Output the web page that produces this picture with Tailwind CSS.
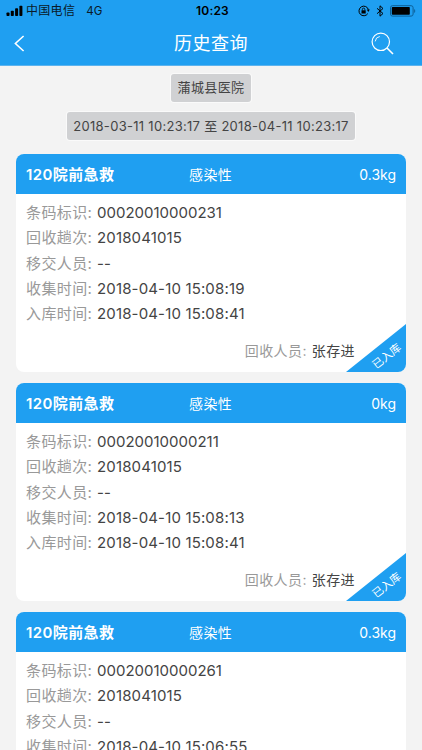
<!DOCTYPE html>
<html lang="zh-CN">
<head>
  <meta charset="UTF-8">
  <title>历史查询</title>
  <meta name="viewport" content="width=device-width, initial-scale=1.0" />
  <script src="https://cdn.jsdelivr.net/npm/@tailwindcss/browser@4"></script>
</head>
<body class="bg-[#f3f3f3] h-screen overflow-hidden font-['Inter','Noto_Sans_CJK_SC',sans-serif] text-[#444]">
  <header class="bg-[#1f9ff1] h-[66px] border-b border-[#5cb3ee]">
    <!-- Statusleiste -->
    <div class="grid grid-cols-3 items-center h-[22px] px-1.5 text-[#0a1a28] text-xs leading-none">
      <div class="flex items-center">
        <svg class="w-[17px] h-3 mr-[3px]" viewBox="0 0 17 12" fill="#000">
          <rect x="0.5" y="7.5" width="3" height="3.5" rx="0.8" />
          <rect x="4.8" y="5.7" width="3" height="5.3" rx="0.8" />
          <rect x="9.1" y="3.3" width="3" height="7.7" rx="0.8" />
          <rect x="13.4" y="0.8" width="3" height="10.2" rx="0.8" />
        </svg>
        <span class="tracking-[0.3px]">中国电信</span>
        <span class="ml-[11px] pt-0.5 text-[11.5px]">4G</span>
      </div>
      <div class="text-center text-black font-semibold tracking-[0.2px] pl-[3px]">10:23</div>
      <div class="flex items-center justify-end -mr-0.5">
        <svg class="w-3 h-3 mr-1.5" viewBox="0 0 12 12" fill="none" stroke="#000" stroke-width="1">
          <path d="M9.8 8.6A4.8 4.8 0 1 1 10.4 4.6" />
          <path d="M8.8 4.6h3L10.3 6.9z" fill="#000" stroke="none" />
          <rect x="3.5" y="5.3" width="4.2" height="3.2" fill="#000" stroke="none" />
          <path d="M4.4 5.4V4.3a1.2 1.2 0 0 1 2.4 0v1.1" stroke-width="0.8" />
        </svg>
        <svg class="w-2 h-3 mr-1.5" viewBox="0 0 8 12" fill="none" stroke="#000" stroke-width="1">
          <path d="M1 3.3l6 5.2-3 2.7V0.8l3 2.7-6 5.2" />
        </svg>
        <svg class="w-[26px] h-3 mr-0.5" viewBox="0 0 26 12" fill="none">
          <rect x="0.5" y="0.7" width="22.6" height="10.4" rx="2" stroke="#0d5f96" />
          <rect x="1.8" y="2" width="18" height="7.8" rx="0.8" fill="#000" />
          <path d="M24.2 4v4c1.4-.5 1.4-3.5 0-4z" fill="#0d5f96" />
        </svg>
      </div>
    </div>
    <!-- Titel -->
    <div class="flex items-center justify-between h-[43px] pl-3.5 pr-7 text-white">
      <svg class="w-[11px] h-[17px] mr-[12px]" viewBox="0 0 11 17" fill="none" stroke="#fff" stroke-width="1.6">
        <path d="M9.6 1L1.4 8.5l8.2 7.5" />
      </svg>
      <h1 class="ml-3.5 text-[18px] leading-none tracking-[0.5px]">历史查询</h1>
      <svg class="w-[23px] h-[23px]" viewBox="0 0 23 23" fill="none" stroke="#fff" stroke-width="1.2">
        <circle cx="9.8" cy="9.8" r="8.7" />
        <path d="M4.2 9.4a5.4 5.4 0 0 1 4.6-4.9" stroke-width="0.9" />
        <path d="M16 16l6 6" stroke-width="1.6" />
      </svg>
    </div>
  </header>

  <main class="px-4">
    <div class="flex flex-col items-center gap-2.5 pt-2 pb-3.5 text-[13px]">
      <div class="h-[28px] px-1.5 flex items-center bg-[#d0d1d3] rounded-[3px] ring-1 ring-white/60">
        <span class="tracking-[0.4px]">蒲城县医院</span>
      </div>
      <div class="h-[28px] px-1.5 pt-0.5 flex items-center bg-[#d0d1d3] rounded-[3px] ring-1 ring-white/60">
        <span class="whitespace-nowrap tracking-[0.29px]">2018-03-11 10:23:17 至 2018-04-11 10:23:17</span>
      </div>
    </div>

    <div class="flex flex-col gap-[11px]">
      <section class="relative h-[218px] shrink-0 bg-white rounded-lg overflow-hidden">
        <div class="flex items-center h-10 px-2.5 pt-px bg-[#1f9ff1] text-white text-sm">
          <h2 class="w-[163px] font-semibold text-[15px] tracking-[0.4px]">120院前急救</h2>
          <span class="flex-1 tracking-[0.4px]">感染性</span>
          <span>0.3kg</span>
        </div>
        <div class="px-2.5 pt-1.5 text-[15px] leading-[25.3px]">
          <div class="flex"><span class="w-[71px] tracking-[0.4px] text-[#999]">条码标识:</span><span>00020010000231</span></div>
          <div class="flex"><span class="w-[71px] tracking-[0.4px] text-[#999]">回收趟次:</span><span class="tracking-[0.15px]">2018041015</span></div>
          <div class="flex"><span class="w-[71px] tracking-[0.4px] text-[#999]">移交人员:</span><span>--</span></div>
          <div class="flex"><span class="w-[71px] tracking-[0.4px] text-[#999]">收集时间:</span><span class="tracking-[0.15px]">2018-04-10 15:08:19</span></div>
          <div class="flex"><span class="w-[71px] tracking-[0.4px] text-[#999]">入库时间:</span><span class="tracking-[0.15px]">2018-04-10 15:08:41</span></div>
        </div>
        <div class="flex justify-end pr-[51px] pt-3 text-sm leading-[25px] tracking-[0.4px]"><span class="w-[67px] text-[#999]">回收人员:</span><span>张存进</span></div>
        <div class="absolute right-0 bottom-0 w-[60px] h-[48px] bg-[#1f9ff1] [clip-path:polygon(100%_0,100%_100%,0_100%)]">
          <span class="absolute left-[24px] top-[24px] text-[11px] leading-4 text-white whitespace-nowrap -rotate-[38deg]">已入库</span>
        </div>
      </section>

      <section class="relative h-[218px] shrink-0 bg-white rounded-lg overflow-hidden">
        <div class="flex items-center h-10 px-2.5 pt-px bg-[#1f9ff1] text-white text-sm">
          <h2 class="w-[163px] font-semibold text-[15px] tracking-[0.4px]">120院前急救</h2>
          <span class="flex-1 tracking-[0.4px]">感染性</span>
          <span>0kg</span>
        </div>
        <div class="px-2.5 pt-1.5 text-[15px] leading-[25.3px]">
          <div class="flex"><span class="w-[71px] tracking-[0.4px] text-[#999]">条码标识:</span><span>00020010000211</span></div>
          <div class="flex"><span class="w-[71px] tracking-[0.4px] text-[#999]">回收趟次:</span><span class="tracking-[0.15px]">2018041015</span></div>
          <div class="flex"><span class="w-[71px] tracking-[0.4px] text-[#999]">移交人员:</span><span>--</span></div>
          <div class="flex"><span class="w-[71px] tracking-[0.4px] text-[#999]">收集时间:</span><span class="tracking-[0.15px]">2018-04-10 15:08:13</span></div>
          <div class="flex"><span class="w-[71px] tracking-[0.4px] text-[#999]">入库时间:</span><span class="tracking-[0.15px]">2018-04-10 15:08:41</span></div>
        </div>
        <div class="flex justify-end pr-[51px] pt-3 text-sm leading-[25px] tracking-[0.4px]"><span class="w-[67px] text-[#999]">回收人员:</span><span>张存进</span></div>
        <div class="absolute right-0 bottom-0 w-[60px] h-[48px] bg-[#1f9ff1] [clip-path:polygon(100%_0,100%_100%,0_100%)]">
          <span class="absolute left-[24px] top-[24px] text-[11px] leading-4 text-white whitespace-nowrap -rotate-[38deg]">已入库</span>
        </div>
      </section>

      <section class="relative h-[218px] shrink-0 bg-white rounded-lg overflow-hidden">
        <div class="flex items-center h-10 px-2.5 pt-px bg-[#1f9ff1] text-white text-sm">
          <h2 class="w-[163px] font-semibold text-[15px] tracking-[0.4px]">120院前急救</h2>
          <span class="flex-1 tracking-[0.4px]">感染性</span>
          <span>0.3kg</span>
        </div>
        <div class="px-2.5 pt-1.5 text-[15px] leading-[25.3px]">
          <div class="flex"><span class="w-[71px] tracking-[0.4px] text-[#999]">条码标识:</span><span>00020010000261</span></div>
          <div class="flex"><span class="w-[71px] tracking-[0.4px] text-[#999]">回收趟次:</span><span class="tracking-[0.15px]">2018041015</span></div>
          <div class="flex"><span class="w-[71px] tracking-[0.4px] text-[#999]">移交人员:</span><span>--</span></div>
          <div class="flex"><span class="w-[71px] tracking-[0.4px] text-[#999]">收集时间:</span><span class="tracking-[0.15px]">2018-04-10 15:06:55</span></div>
        </div>
      </section>
    </div>
  </main>
</body>
</html>
